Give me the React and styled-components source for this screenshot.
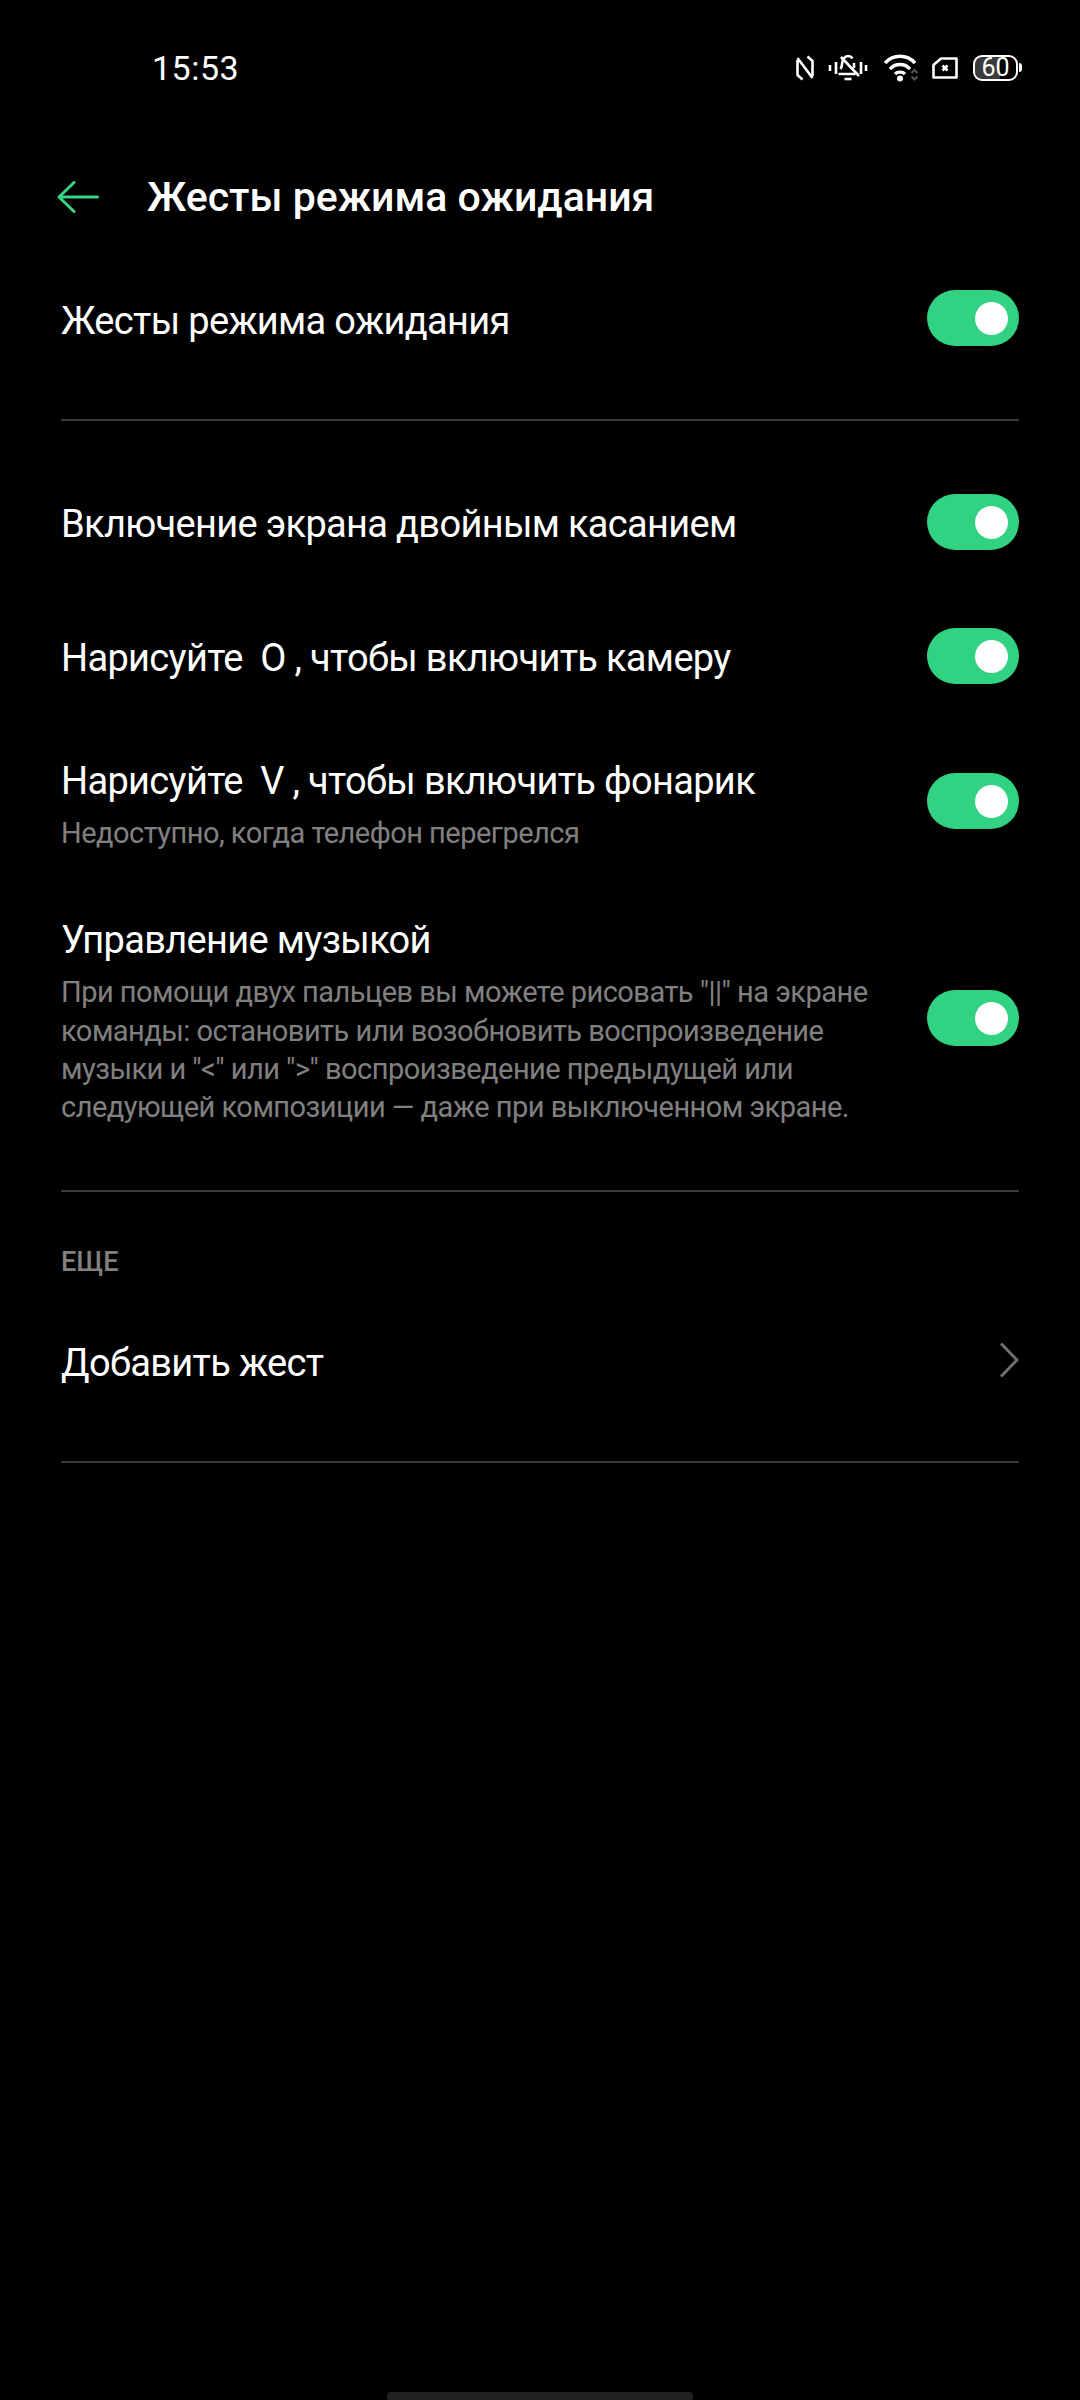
import React from 'react'
import styled, { createGlobalStyle } from 'styled-components'

const GlobalStyle = createGlobalStyle`
  html, body {
    margin: 0;
    padding: 0;
    background: #000;
  }
  body {
    font-family: Roboto, "Noto Sans", sans-serif;
    color: #fff;
  }
`

function NfcIcon() {
  return (
    <svg width="21" height="26" viewBox="0 0 21 26" fill="none" stroke="#fff" strokeWidth="2.6">
      <path d="M2.500 5v15l5 4.500M17.500 21V6l-5-4.500M2.500 3l15 20" strokeLinejoin="round" />
    </svg>
  )
}

function BellOffIcon() {
  return (
    <svg width="44" height="28" viewBox="0 0 44 28" fill="none" stroke="#fff" strokeWidth="2.600">
      <path d="M2 11v6M8 8v12M33 8v12M38 11v6" />
      <path d="M12.500 15c1-1.500 1.500-3 1.500-5 0-4.500 3-8 6-8 2 0 3.500 1 4.500 2.500M26 9v5M10.500 20h17" strokeLinejoin="round" />
      <path d="M13 3l18 19" />
      <path d="M16.500 25h7" />
    </svg>
  )
}

function WifiIcon() {
  return (
    <svg width="36" height="28" viewBox="0 0 36 28" fill="none">
      <path d="M1 9C9 0 23 0 31 9M6 15c5-6 15-6 20 0M11 20c2.500-2.500 7.500-2.500 10 0" stroke="#fff" strokeWidth="3.400" />
      <circle cx="16" cy="24.500" r="3" fill="#fff" />
      <path d="M27.500 19l3-3 3 3M27.500 22.500l3 3 3-3" stroke="#555" strokeWidth="2" />
    </svg>
  )
}

function SimIcon() {
  return (
    <svg width="29" height="22" viewBox="0 0 29 22" fill="none">
      <path d="M9 1.500h15.500v19h-23V8z" stroke="#fff" strokeWidth="2.600" strokeLinejoin="round" />
      <path d="M10.500 8.500l5 5M15.500 8.500l-5 5" stroke="#fff" strokeWidth="2.600" />
    </svg>
  )
}

function BackArrow() {
  return (
    <svg width="44" height="32" viewBox="0 0 44 32" fill="none" stroke="#34d583" strokeWidth="3">
      <path d="M41.500 16H3M18 1.500L3 16l15 14.500" strokeLinecap="round" strokeLinejoin="round" />
    </svg>
  )
}

function Chevron() {
  return (
    <svg width="20" height="36" viewBox="0 0 20 36" fill="none" stroke="#707070" strokeWidth="3">
      <path d="M2 1.500L18 18 2 34.500" />
    </svg>
  )
}

function Toggle() {
  return (
    <Track>
      <Knob />
    </Track>
  )
}

export default function App() {
  return (
    <Page>
      <GlobalStyle />
      <StatusBar>
        <Clock>15:53</Clock>
        <StatusIcons>
          <NfcIcon />
          <BellOffIcon />
          <WifiIcon />
          <SimIcon />
          <Battery>60</Battery>
        </StatusIcons>
      </StatusBar>

      <Header>
        <BackButton><BackArrow /></BackButton>
        <Title>Жесты режима ожидания</Title>
      </Header>

      <Row $height={124}>
        <RowLabel $nudge={6}>Жесты режима ожидания</RowLabel>
        <Toggle />
      </Row>
      <Divider $top={39} />

      <RowGroup>
        <Row $height={132}>
          <RowLabel $nudge={3}>Включение экрана двойным касанием</RowLabel>
          <Toggle />
        </Row>
        <Row $height={136}>
          <RowLabel $nudge={3}>Нарисуйте&nbsp; O , чтобы включить камеру</RowLabel>
          <Toggle />
        </Row>
        <Row $height={154}>
          <RowText>
            <RowLabel>Нарисуйте&nbsp; V , чтобы включить фонарик</RowLabel>
            <RowHint>Недоступно, когда телефон перегрелся</RowHint>
          </RowText>
          <Toggle />
        </Row>
        <Row $height={280}>
          <RowText>
            <RowLabel>Управление музыкой</RowLabel>
            <RowHint>
              При помощи двух пальцев вы можете рисовать "||" на экране команды: остановить или
              возобновить воспроизведение музыки и "&lt;" или "&gt;" воспроизведение предыдущей или
              следующей композиции — даже при выключенном экране.
            </RowHint>
          </RowText>
          <Toggle />
        </Row>
      </RowGroup>
      <Divider $top={32} />

      <SectionTitle>ЕЩЕ</SectionTitle>
      <Row $height={160}>
        <RowLabel $nudge={5}>Добавить жест</RowLabel>
        <Chevron />
      </Row>
      <Divider $top={21} />

      <HomeBar />
    </Page>
  )
}

const Page = styled.div`
  position: relative;
  width: 1080px;
  height: 2400px;
  overflow: hidden;
  background: #000;
`

const StatusBar = styled.div`
  height: 136px;
  display: flex;
  align-items: center;
  justify-content: space-between;
  padding: 0 62px 0 152px;
`

const Clock = styled.div`
  font-size: 34px;
  line-height: 40px;
  letter-spacing: 0.5px;
`

const StatusIcons = styled.div`
  display: flex;
  align-items: center;
  gap: 12px;
`

const Battery = styled.div`
  position: relative;
  width: 45px;
  height: 26px;
  box-sizing: border-box;
  border: 2.5px solid #fff;
  border-radius: 9px;
  background: linear-gradient(90deg, #3c3c3c 62%, #000 62%);
  font-size: 25px;
  line-height: 21px;
  text-align: center;

  &::after {
    content: '';
    position: absolute;
    right: -5.500px;
    top: 6px;
    width: 3px;
    height: 9px;
    border-radius: 0 3px 3px 0;
    background: #fff;
  }
`

const Header = styled.div`
  height: 120px;
  display: flex;
  align-items: center;
  padding: 0 56px;
`

const BackButton = styled.div`
  width: 91px;
  display: flex;
  align-items: center;
  padding-top: 2px;
`

const Title = styled.div`
  font-size: 41px;
  font-weight: 500;
  padding-top: 2px;
`

const RowGroup = styled.div`
  margin-top: 35px;
`

const Row = styled.div`
  height: ${props => props.$height}px;
  display: flex;
  align-items: center;
  justify-content: space-between;
  padding: 0 61px;
`

const RowText = styled.div`
  display: flex;
  flex-direction: column;
  gap: 8px;
  width: 825px;
  padding-top: 6px;
`

const RowLabel = styled.div`
  font-size: 38px;
  line-height: 50px;
  letter-spacing: -0.67px;
  padding-top: ${props => props.$nudge || 0}px;
`

const RowHint = styled.div`
  font-size: 29px;
  line-height: 38.400px;
  letter-spacing: -0.52px;
  color: #808080;
`

const Track = styled.div`
  flex: none;
  width: 92px;
  height: 56px;
  border-radius: 28px;
  background: #31d282;
  display: flex;
  align-items: center;
  justify-content: flex-end;
  padding-right: 11px;
  box-sizing: border-box;
`

const Knob = styled.div`
  width: 33px;
  height: 33px;
  border-radius: 50%;
  background: #fff;
`

const Divider = styled.div`
  height: 2px;
  margin: ${props => props.$top}px 61px 0;
  background: #3a3a3a;
`

const SectionTitle = styled.div`
  margin: 52px 61px 0;
  font-size: 27px;
  line-height: 36px;
  font-weight: 500;
  color: #808080;
`

const HomeBar = styled.div`
  position: absolute;
  left: 387px;
  bottom: 0;
  width: 306px;
  height: 8px;
  border-radius: 4px 4px 0 0;
  background: #222;
`
